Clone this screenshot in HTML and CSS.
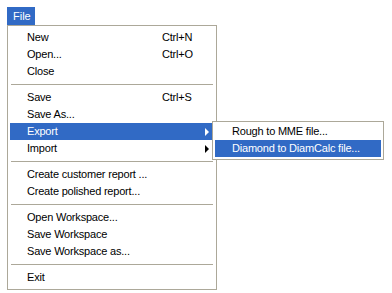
FILE: index.html
```html
<!DOCTYPE html>
<html lang="en">
<head>
    <meta charset="UTF-8">
    <title>File menu</title>
    <link rel="stylesheet" href="styles.css">
</head>
<body>
    <div class="menubar">
        <div class="menu-title">File</div>
        <div class="menu">
            <div class="item"><span class="label">New</span><span class="key">Ctrl+N</span></div>
            <div class="item"><span class="label">Open...</span><span class="key">Ctrl+O</span></div>
            <div class="item"><span class="label">Close</span></div>
            <div class="separator"></div>
            <div class="item"><span class="label">Save</span><span class="key">Ctrl+S</span></div>
            <div class="item"><span class="label">Save As...</span></div>
            <div class="item active has-sub">
                <span class="label">Export</span><span class="arrow"></span>
                <div class="submenu">
                    <div class="item"><span class="label">Rough to MME file...</span></div>
                    <div class="item active"><span class="label">Diamond to DiamCalc file...</span></div>
                </div>
            </div>
            <div class="item has-sub"><span class="label">Import</span><span class="arrow"></span></div>
            <div class="separator"></div>
            <div class="item"><span class="label">Create customer report ...</span></div>
            <div class="item"><span class="label">Create polished report...</span></div>
            <div class="separator"></div>
            <div class="item"><span class="label">Open Workspace...</span></div>
            <div class="item"><span class="label">Save Workspace</span></div>
            <div class="item"><span class="label">Save Workspace as...</span></div>
            <div class="separator"></div>
            <div class="item"><span class="label">Exit</span></div>
        </div>
    </div>
</body>
</html>
```

FILE: styles.css
```css
body {
    margin: 0;
    background-color: white;
    font-family: "Liberation Sans", Arial, sans-serif;
    font-size: 11px;
    letter-spacing: -0.2px;
    color: black;
}
.menubar {
    padding: 7px 0 0 7px;
}
.menu-title {
    width: 28px;
    height: 18px;
    line-height: 18px;
    padding-left: 6px;
    box-sizing: border-box;
    background-color: #316ac5;
    color: white;
    letter-spacing: 0;
}
.menu {
    position: relative;
    width: 210px;
    box-sizing: border-box;
    border: 1px solid #aca899;
    padding: 3px 2px;
    background-color: white;
}
.item {
    position: relative;
    display: flex;
    height: 17px;
    line-height: 17px;
    padding-left: 17px;
}
.item .label {
    width: 135px;
    white-space: nowrap;
}
.item .key {
    white-space: nowrap;
}
.active {
    background-color: #316ac5;
    color: white;
}
.arrow {
    position: absolute;
    right: 5px;
    top: 5px;
    width: 0;
    height: 0;
    border-top: 4px solid transparent;
    border-bottom: 4px solid transparent;
    border-left: 4px solid black;
}
.active .arrow {
    border-left-color: white;
}
.separator {
    height: 9px;
    display: flex;
    align-items: center;
    padding: 0 1px;
}
.separator::before {
    content: "";
    flex: 1;
    height: 1px;
    background-color: #aca899;
}
.submenu {
    position: absolute;
    left: 202px;
    top: -2px;
    width: 172px;
    box-sizing: border-box;
    border: 1px solid #aca899;
    padding: 1px 2px 2px;
    background-color: white;
    color: black;
}
.submenu .item .label {
    width: auto;
}
.submenu .active {
    color: white;
}
```
